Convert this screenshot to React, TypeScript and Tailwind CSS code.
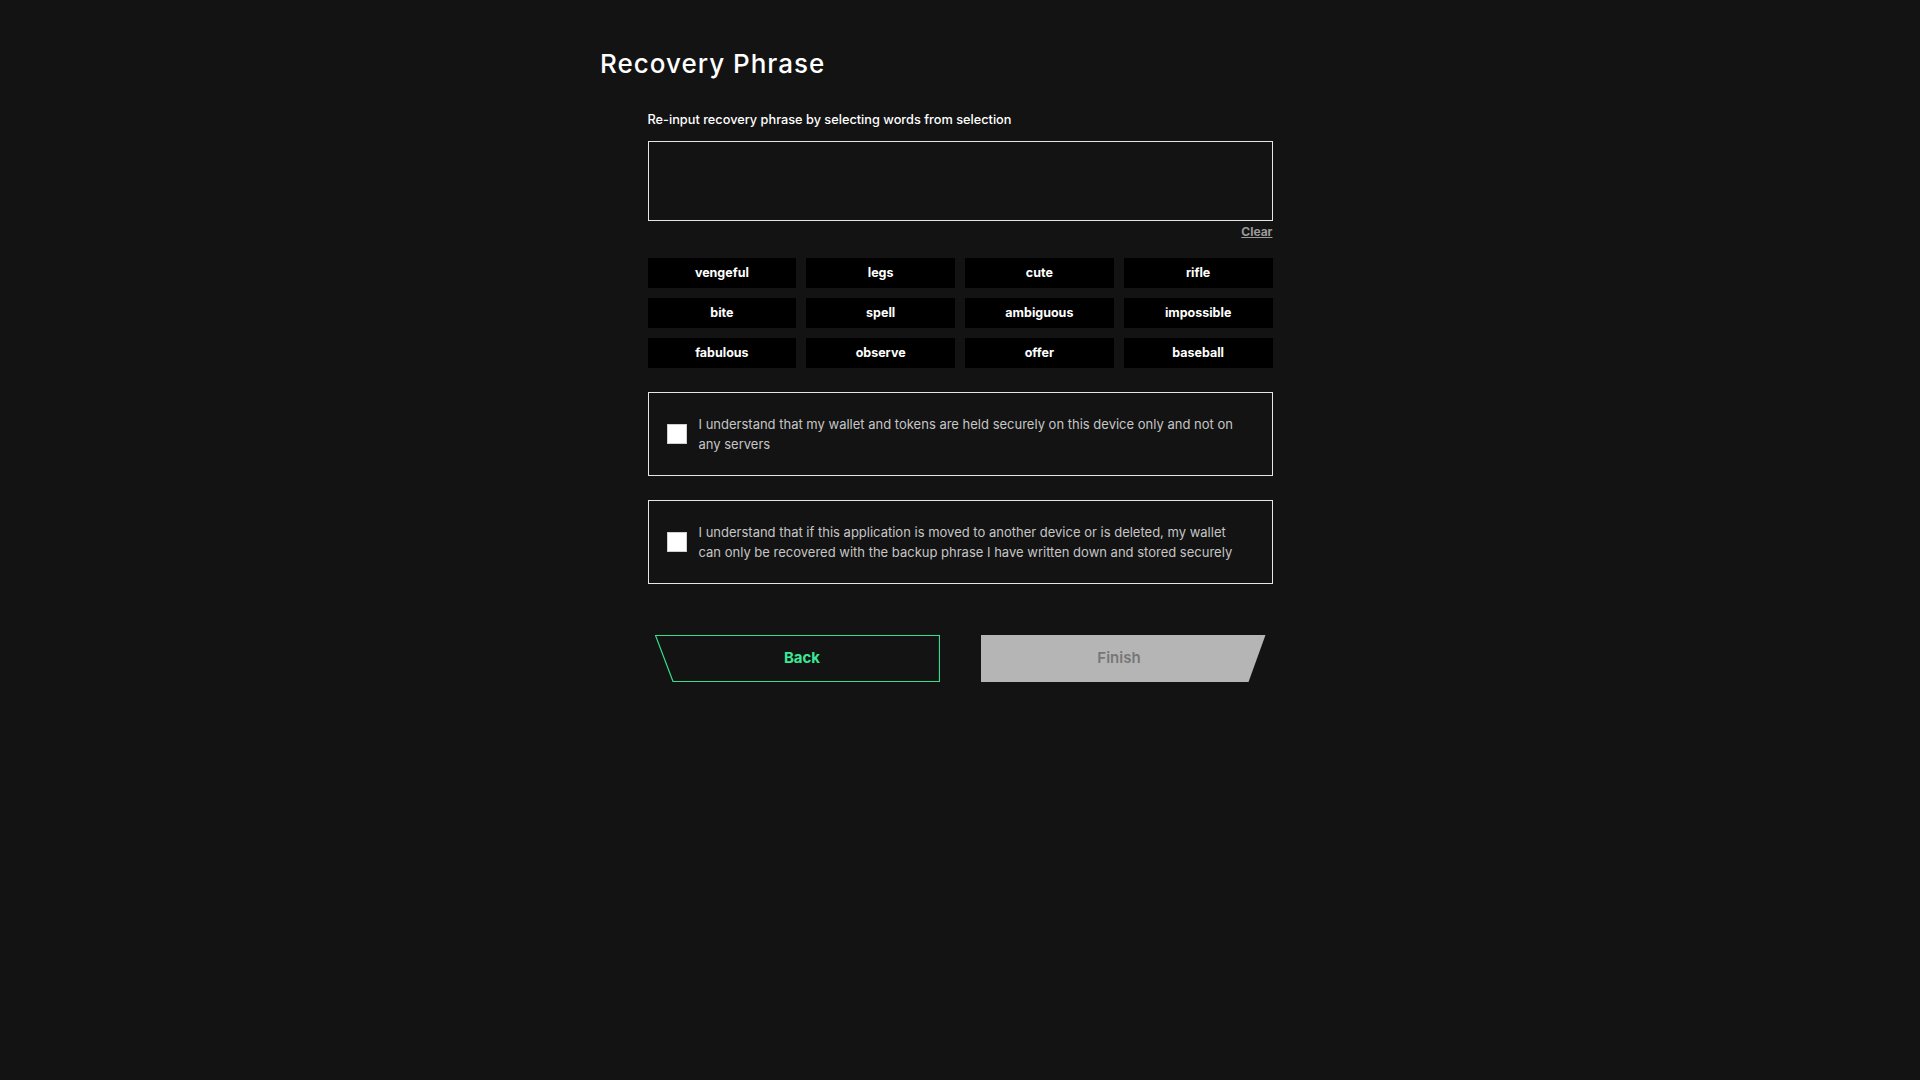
import React from 'react';

const words = [
  'vengeful', 'legs', 'cute', 'rifle',
  'bite', 'spell', 'ambiguous', 'impossible',
  'fabulous', 'observe', 'offer', 'baseball',
];

const terms = [
  'I understand that my wallet and tokens are held securely on this device only and not on any servers',
  'I understand that if this application is moved to another device or is deleted, my wallet can only be recovered with the backup phrase I have written down and stored securely',
];

const Term: React.FC<{ text: string }> = ({ text }) => (
  <label className="flex items-center h-[84px] border border-[#e6e6e6] pl-[18px] pr-[30px] gap-[12px] cursor-pointer">
    <span className="w-[20px] h-[20px] shrink-0 bg-white border border-[#cfcfcf]" />
    <span className="text-[13px] leading-[20px] text-[#c6c6c6]">{text}</span>
  </label>
);

export default function App() {
  return (
    <div className="min-h-screen w-full bg-[#131313] font-['Inter',sans-serif] text-white">
      <div className="w-[720px] mx-auto pt-[48px]">
        <h1 className="text-[26px] leading-[32px] font-medium tracking-[1px]">Recovery Phrase</h1>

        <div className="w-[625px] mx-auto mt-[32px]">
          <p className="text-[12.75px] leading-[16px] font-medium">Re-input recovery phrase by selecting words from selection</p>

          <div className="mt-[13px] h-[80px] border border-[#e6e6e6]" />
          <div className="mt-[4px] flex justify-end">
            <button className="text-[12px] leading-[14px] font-bold text-[#9a9a9a] underline">Clear</button>
          </div>

          <div className="mt-[19px] grid grid-cols-4 gap-[10px]">
            {words.map((w) => (
              <button key={w} className="h-[30px] bg-black text-[12.5px] font-bold text-white">
                {w}
              </button>
            ))}
          </div>

          <div className="mt-[24px] flex flex-col gap-[24px]">
            {terms.map((t) => (
              <Term key={t} text={t} />
            ))}
          </div>

          <div className="mt-[51px] px-[7px] flex justify-between">
            <button className="relative w-[285px] h-[47px] pl-[10px] text-[15px] font-bold text-[#3be896]">
              <svg className="absolute inset-0" width="285" height="47" viewBox="0 0 285 47">
                <polygon points="0.5,0.5 284.5,0.5 284.5,46.5 18,46.5" fill="none" stroke="#34e08c" strokeWidth="1.2" />
              </svg>
              <span className="relative">Back</span>
            </button>
            <button className="w-[285px] h-[47px] pr-[8px] bg-[#b5b5b5] text-[15px] font-semibold text-[#777777] [clip-path:polygon(0_0,100%_0,calc(100%-17px)_100%,0_100%)]">
              Finish
            </button>
          </div>
        </div>
      </div>
    </div>
  );
}
